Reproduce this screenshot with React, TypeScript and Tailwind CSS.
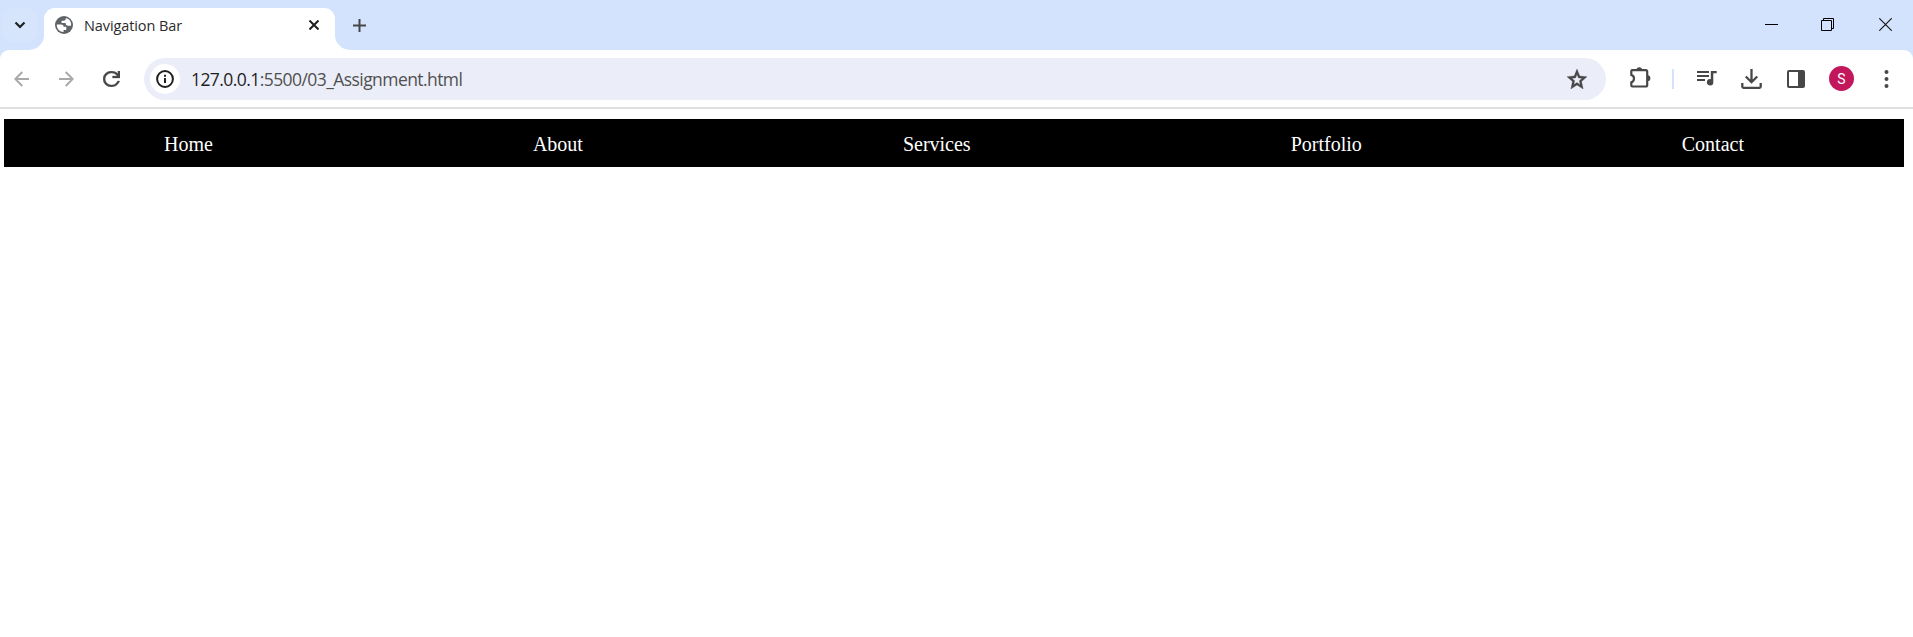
import React from "react";

const links = ["Home", "About", "Services", "Portfolio", "Contact"];

function TabStrip() {
  return (
    <div className="flex h-[50px] items-start bg-[#d3e3fd]">
      <button className="mt-2 ml-[2px] flex h-[34px] w-[35px] items-center justify-center rounded-[11px] bg-[#d7e5fc]">
        <svg width="12" height="8" viewBox="0 0 12 8" fill="none" stroke="#1f1f1f" strokeWidth="2.2">
          <path d="M1.500 1.500 6 6l4.500-4.500" />
        </svg>
      </button>
      <svg className="mt-[35px] -ml-[8px]" width="15" height="15" viewBox="0 0 15 15" fill="#fff">
        <path d="M15 0A15 15 0 0 1 0 15H15Z" />
      </svg>
      <div className="mt-2 flex h-[42px] w-[291px] items-start rounded-t-[11px] bg-white pl-[11px]">
        <svg className="mt-2" width="18" height="18" viewBox="2 2 20 20" fill="#5f6368">
          <circle cx="12" cy="12" r="10" />
          <path
            fill="#fff"
            d="M4 11.500h4.500c2.200 0 3 1 3 2.500h3v3.500h-3v2.400C7.500 20 4 16.500 4 12.400ZM14 4.300c0 2.300-.8 3-2.500 3H9.300v2.500h4.500c0 2 1 3 2.700 3h3.300c.9-4-1.800-7.500-5.800-8.500Z"
          />
        </svg>
        <span className="mt-[8px] ml-[11px] w-[225px] font-['Open_Sans',sans-serif] text-[14.500px] leading-5 tracking-[-0.100px] whitespace-nowrap text-[#2b2b2b]">
          Navigation Bar
        </span>
        <svg className="mt-3" width="10" height="10" viewBox="0 0 10 10" stroke="#1f1f1f" strokeWidth="2">
          <path d="m.5.5 9 9m0-9-9 9" />
        </svg>
      </div>
      <svg className="mt-[35px]" width="15" height="15" viewBox="0 0 15 15" fill="#fff">
        <path d="M0 0A15 15 0 0 0 15 15H0Z" />
      </svg>
      <svg className="mt-[18.500px] ml-[3px]" width="13" height="13" viewBox="0 0 13 13" stroke="#474747" strokeWidth="2">
        <path d="M6.500 0v13M0 6.500h13" />
      </svg>
      <div className="mt-[18px] mr-[21px] ml-auto flex">
        <svg className="mr-[43px]" width="13" height="13" fill="#000">
          <path d="M0 6h13v1H0z" />
        </svg>
        <svg className="mr-[45px]" width="13" height="13" viewBox="0 0 13 13" fill="none" stroke="#000">
          <path d="M.5 2.500h10v10H.5zM2.500 2.500v-2h10v10h-2" />
        </svg>
        <svg width="13" height="13" viewBox="0 0 13 13" stroke="#111" strokeWidth="1.100">
          <path d="m.3.3 12.400 12.400m0-12.400L.3 12.700" />
        </svg>
      </div>
    </div>
  );
}

function Toolbar() {
  return (
    <div className="bg-[#d3e3fd]">
      <div className="flex h-[59px] items-center rounded-t-[9px] border-b-2 border-[#e0e0e0] bg-white">
        <svg className="ml-[14px]" width="15" height="16" viewBox="0 0 15 16" fill="none" stroke="#a9a9a9" strokeWidth="2">
          <path d="M15 8H1.800M8.300 1 1.300 8l7 7" />
        </svg>
        <svg className="ml-[30px]" width="15" height="16" viewBox="0 0 15 16" fill="none" stroke="#a9a9a9" strokeWidth="2">
          <path d="M0 8h13.200M6.700 1l7 7-7 7" />
        </svg>
        <svg className="ml-[29px]" width="17" height="16" viewBox="4 4 16 16" preserveAspectRatio="none" fill="#474747" stroke="#474747" strokeWidth=".3">
          <path d="M12 20q-3.350 0-5.675-2.325T4 12t2.325-5.675T12 4q1.725 0 3.300.713T18 6.750V4h2v7h-7V9h4.200q-.8-1.400-2.188-2.200T12 6Q9.500 6 7.750 7.750T6 12t1.750 4.250T12 18q1.925 0 3.475-1.100T17.650 14h2.100q-.7 2.650-2.850 4.325T12 20" />
        </svg>
        <div className="ml-6 flex h-[42px] w-[1462px] items-center rounded-full bg-[#ebeef8] pr-[19.500px] pl-[6px]">
          <span className="flex h-[30px] w-[30px] items-center justify-center rounded-full bg-white">
            <svg width="18" height="18" viewBox="0 0 18 18" fill="#1f1f1f">
              <circle cx="9" cy="9" r="7.900" fill="none" stroke="#1f1f1f" strokeWidth="2" />
              <path d="M8 8h2v5H8zM8 4.800h2v2H8z" />
            </svg>
          </span>
          <span className="mt-px ml-[11px] font-['Open_Sans',sans-serif] text-[17.500px] leading-6 tracking-[-0.570px] whitespace-nowrap text-[#505050]">
            <span className="text-[#1f1f1f]">127.0.0.1</span>:5500/03_Assignment.html
          </span>
          <svg className="ml-auto" width="20" height="20" viewBox="2 2 20 19" preserveAspectRatio="none" fill="#474747" stroke="#474747" strokeWidth=".3">
            <path d="m8.850 16.825 3.150-1.900 3.150 1.925-.825-3.600 2.775-2.400-3.650-.325-1.450-3.400-1.450 3.375-3.650.325 2.775 2.425zM5.825 21l1.625-7.025L2 9.250l7.200-.625L12 2l2.800 6.625 7.200.625-5.450 4.725L18.175 21 12 17.275z" />
          </svg>
        </div>
        <svg className="-mt-[2px] ml-6" width="22" height="21" viewBox="0 0 22 21" fill="none" stroke="#474747" strokeWidth="2.200">
          <path d="M2.300 3.200h13.400q1.500 0 1.500 1.500v13.300q0 1.500-1.500 1.500H2.300q-1 0-1-1v-3.200q2.700-.7 2.700-3.700T1.300 7.900V4.200q0-1 1-1Z" />
          <path fill="#474747" stroke="none" d="M6.500 3a2.800 2.800 0 0 1 5.600 0ZM17.500 8.300a2.900 2.900 0 0 1 0 5.800Z" />
        </svg>
        <div className="ml-5 h-5 w-[2px] bg-[#d3e3fd]" />
        <svg className="-mt-[2px] ml-[23px]" width="20" height="16" viewBox="0 0 20 16" fill="#474747">
          <path d="M0 1h12v2H0zM0 5h12v2H0zM0 9h8v2H0zM13.800 1h5.900v2.200h-3.400v9.100a3.200 3.200 0 1 1-2.500-3.100Z" />
        </svg>
        <svg className="ml-6" width="21" height="20" viewBox="0 0 21 20" fill="none" stroke="#474747" strokeWidth="2.300">
          <path d="M10.500 0v13M4.800 7.500l5.700 5.700 5.700-5.700" />
          <path d="M1.300 14v3.600q0 1.200 1.200 1.200h16q1.200 0 1.200-1.200V14" />
        </svg>
        <svg className="ml-[25px]" width="18" height="18" viewBox="0 0 18 18" fill="none" stroke="#474747" strokeWidth="2">
          <rect x="1" y="1" width="16" height="16" rx="1" />
          <path fill="#474747" stroke="none" d="M11 1h6v16h-6z" />
        </svg>
        <span className="ml-6 flex h-[25px] w-[25px] items-center justify-center rounded-full bg-[#c2185b] font-[Roboto,sans-serif] text-[14px] leading-none text-white">
          S
        </span>
        <svg className="ml-[30px]" width="5" height="18" viewBox="0 0 5 18" fill="#474747">
          <circle cx="2.500" cy="2" r="2" />
          <circle cx="2.500" cy="9" r="2" />
          <circle cx="2.500" cy="16" r="2" />
        </svg>
      </div>
    </div>
  );
}

export default function App() {
  return (
    <div className="h-[637px] w-[1913px] overflow-hidden bg-white">
      <TabStrip />
      <Toolbar />
      <nav className="mt-[10px] mr-[9px] ml-1 flex h-12 items-center justify-around bg-black pt-[2px] font-['Liberation_Serif',serif] text-[20px] leading-6 text-white">
        {links.map((label) => (
          <a key={label} href="#">
            {label}
          </a>
        ))}
      </nav>
    </div>
  );
}
